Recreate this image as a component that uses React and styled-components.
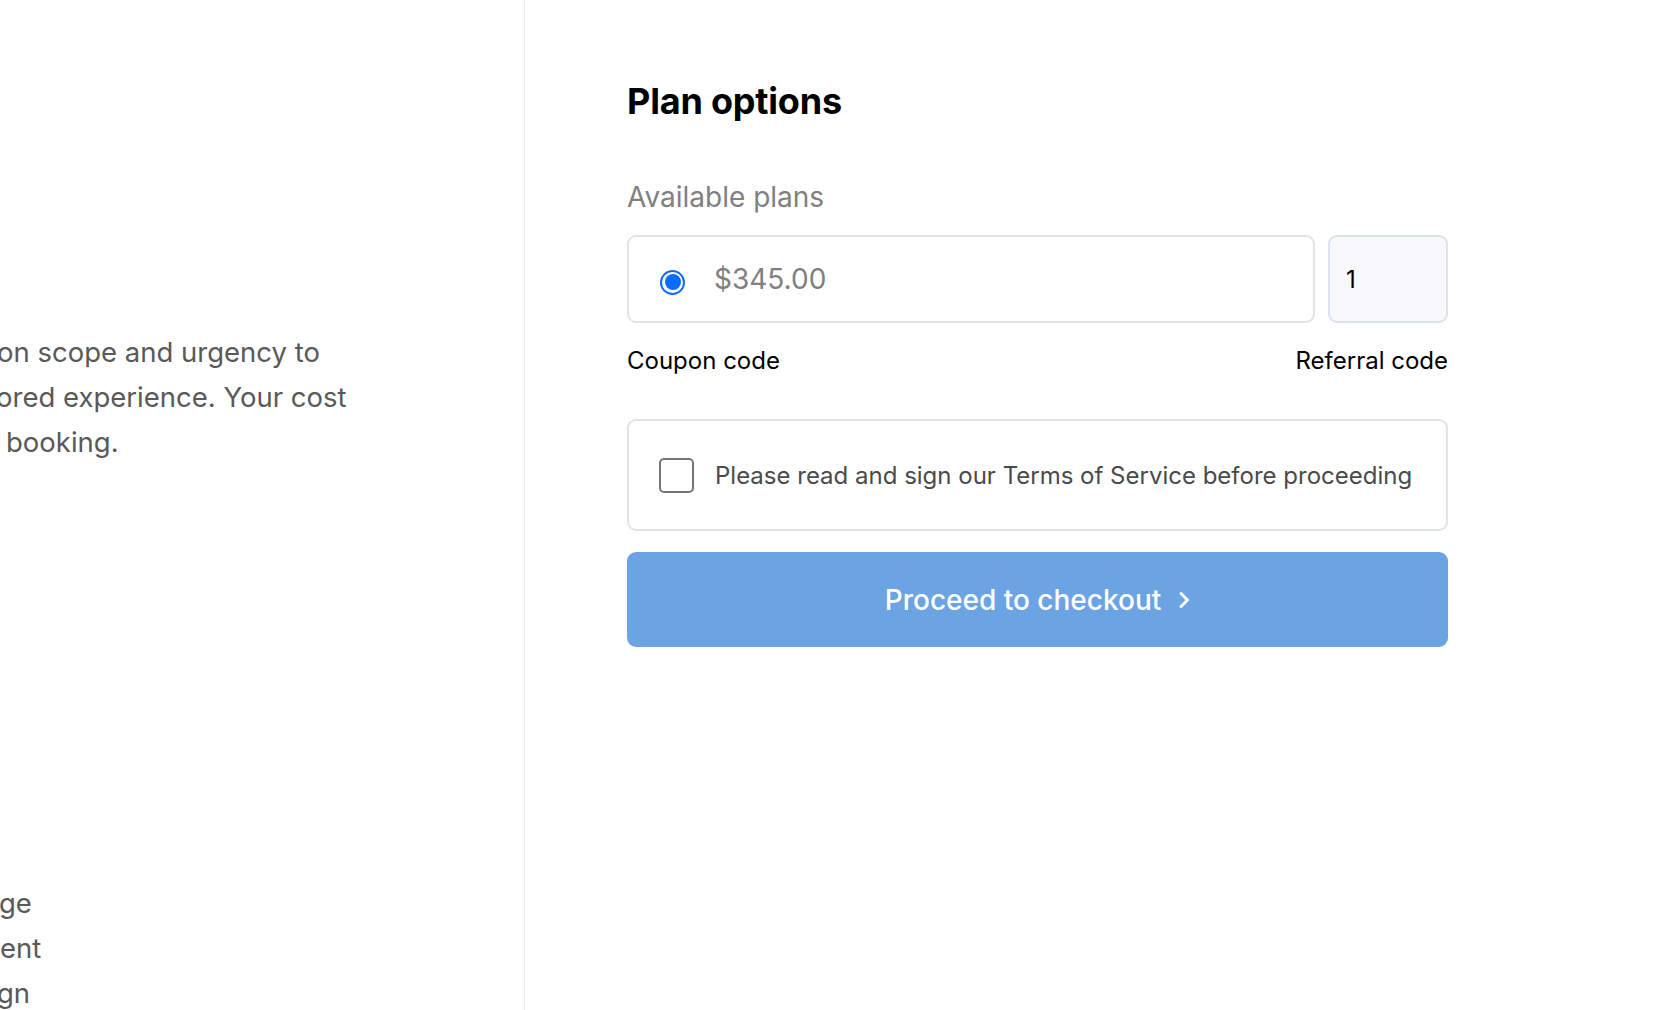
import React, { useState } from "react";
import styled, { createGlobalStyle } from "styled-components";

const GlobalStyle = createGlobalStyle`
  * {
    box-sizing: border-box;
  }
  html,
  body {
    margin: 0;
    padding: 0;
    background: #ffffff;
    font-family: Inter, "Noto Sans", "Liberation Sans", sans-serif;
  }
`;

const Page = styled.div`
  display: grid;
  grid-template-columns: 525px 1fr;
  height: 100vh;
  overflow: hidden;
`;

const InfoPanel = styled.aside`
  display: flex;
  flex-direction: column;
  border-right: 1px solid #ebebeb;
  overflow: hidden;
  padding-top: 330px;
  color: #595959;
  font-size: 27.5px;
  line-height: 45px;
`;

const Blurb = styled.p`
  margin: 0;
`;

const ClippedLine = styled.span`
  display: block;
  white-space: nowrap;
  margin-left: ${(p) => p.$shift || 0}px;
`;

const FeatureList = styled.ul`
  list-style: none;
  margin: auto 0 -6px 0;
  padding: 0;
`;

const FeatureItem = styled.li`
  white-space: nowrap;
  margin-left: ${(p) => p.$shift || 0}px;
`;

const Main = styled.main`
  padding: 80px 0 0 102px;
`;

const Form = styled.div`
  width: 821px;
  display: flex;
  flex-direction: column;
`;

const Title = styled.h1`
  margin: 0;
  font-size: 36px;
  line-height: 42px;
  font-weight: 700;
  color: #000000;
  letter-spacing: -0.2px;
`;

const SectionLabel = styled.div`
  margin-top: 60px;
  font-size: 28px;
  line-height: 31px;
  color: #808080;
`;

const PlanRow = styled.div`
  display: flex;
  gap: 13px;
  margin-top: 22px;
`;

const PlanOption = styled.label`
  flex: 1;
  height: 88px;
  display: flex;
  align-items: center;
  gap: 29px;
  padding-left: 31px;
  border: 2px solid #e3e4e8;
  border-radius: 9px;
  background: #ffffff;
  cursor: pointer;
`;

const Radio = styled.span`
  width: 25px;
  height: 25px;
  border-radius: 50%;
  border: 2px solid #0a6dff;
  display: flex;
  align-items: center;
  justify-content: center;
  flex-shrink: 0;
  margin-top: 6px;

  &::after {
    content: "";
    width: 16px;
    height: 16px;
    border-radius: 50%;
    background: #0a6dff;
  }
`;

const Price = styled.span`
  font-size: 28px;
  color: #808080;
`;

const QuantityInput = styled.input`
  width: 120px;
  height: 88px;
  padding: 0 0 0 16px;
  border: 2px solid #dde3ec;
  border-radius: 9px;
  background: #f9f9fc;
  font-family: inherit;
  font-size: 24px;
  color: #000000;
  outline: none;
`;

const CodeRow = styled.div`
  display: flex;
  justify-content: space-between;
  margin-top: 25px;
  font-size: 24px;
  line-height: 26px;
  color: #000000;
`;

const TermsBox = styled.label`
  display: flex;
  align-items: center;
  gap: 21px;
  height: 112px;
  margin-top: 45px;
  padding-left: 30px;
  border: 2px solid #dfe3eb;
  border-radius: 9px;
  cursor: pointer;
`;

const Checkbox = styled.span`
  width: 35px;
  height: 35px;
  border: 2px solid #767676;
  border-radius: 5px;
  flex-shrink: 0;
  background: ${(p) => (p.$checked ? "#0a6dff" : "#ffffff")};
`;

const TermsText = styled.span`
  font-size: 24px;
  color: #4a4a4a;
  white-space: nowrap;
`;

const CheckoutButton = styled.button`
  margin-top: 21px;
  height: 95px;
  border: none;
  border-radius: 9px;
  background: #6ca4e3;
  color: #ffffff;
  font-family: inherit;
  font-size: 28px;
  font-weight: 500;
  display: flex;
  align-items: center;
  justify-content: center;
  gap: 17px;
  cursor: pointer;
`;

function Chevron() {
  return (
    <svg width="12" height="18" viewBox="0 0 12 18" fill="none">
      <path
        d="M3 2.5 L9.5 9 L3 15.5"
        stroke="#ffffff"
        strokeWidth="3"
        strokeLinecap="round"
        strokeLinejoin="round"
      />
    </svg>
  );
}

export default function App() {
  const [agreed, setAgreed] = useState(false);
  const [qty, setQty] = useState("1");

  return (
    <>
      <GlobalStyle />
      <Page>
        <InfoPanel>
          <Blurb>
            <ClippedLine $shift={-3}>on scope and urgency to</ClippedLine>
            <ClippedLine $shift={-4}>ored experience. Your cost</ClippedLine>
            <ClippedLine $shift={6}>booking.</ClippedLine>
          </Blurb>
          <FeatureList>
            <FeatureItem $shift={-1}>ge</FeatureItem>
            <FeatureItem $shift={0}>ent</FeatureItem>
            <FeatureItem $shift={-3}>gn</FeatureItem>
          </FeatureList>
        </InfoPanel>

        <Main>
          <Form>
            <Title>Plan options</Title>
            <SectionLabel>Available plans</SectionLabel>
            <PlanRow>
              <PlanOption>
                <Radio />
                <Price>$345.00</Price>
              </PlanOption>
              <QuantityInput
                value={qty}
                onChange={(e) => setQty(e.target.value)}
              />
            </PlanRow>
            <CodeRow>
              <span>Coupon code</span>
              <span>Referral code</span>
            </CodeRow>
            <TermsBox onClick={() => setAgreed(!agreed)}>
              <Checkbox $checked={agreed} />
              <TermsText>
                Please read and sign our Terms of Service before proceeding
              </TermsText>
            </TermsBox>
            <CheckoutButton>
              Proceed to checkout
              <Chevron />
            </CheckoutButton>
          </Form>
        </Main>
      </Page>
    </>
  );
}
